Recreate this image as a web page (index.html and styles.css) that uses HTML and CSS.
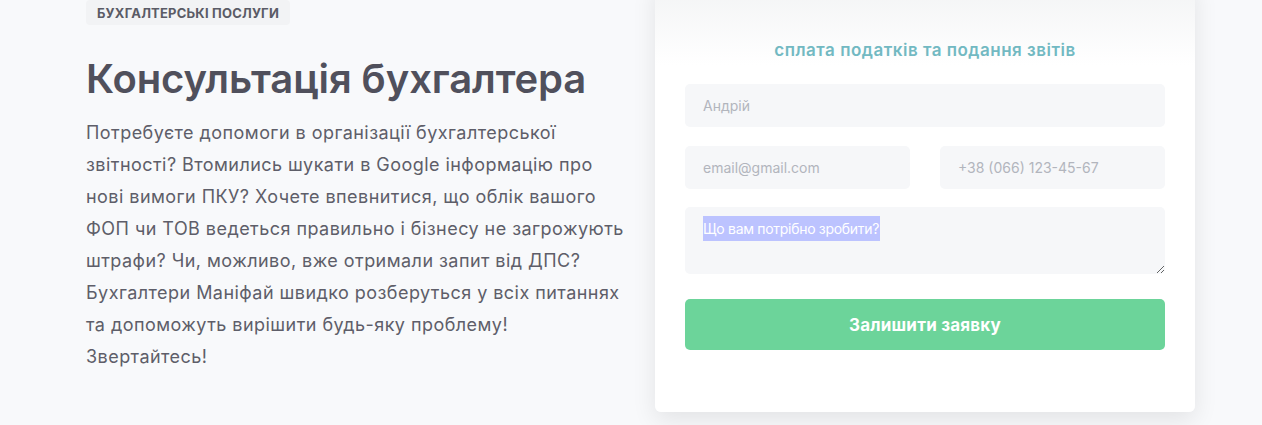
FILE: index.html
```html
<!DOCTYPE html>
<html lang="uk">
<head>
<meta charset="utf-8">
<link rel="stylesheet" href="styles.css">
</head>
<body>
<section class="hero">
  <div class="info">
    <span class="badge">Бухгалтерські послуги</span>
    <h1 class="title">Консультація бухгалтера</h1>
    <p class="text">Потребуєте допомоги в організації бухгалтерської звітності? Втомились шукати в Google інформацію про нові вимоги ПКУ? Хочете впевнитися, що облік вашого ФОП чи ТОВ ведеться правильно і бізнесу не загрожують штрафи? Чи, можливо, вже отримали запит від ДПС? Бухгалтери Маніфай швидко розберуться у всіх питаннях та допоможуть вирішити будь-яку проблему! Звертайтесь!</p>
  </div>
  <form class="card">
    <h2 class="card-title">сплата податків та подання звітів</h2>
    <input class="field" type="text" placeholder="Андрій">
    <div class="row">
      <input class="field" type="email" placeholder="email@gmail.com">
      <input class="field" type="tel" placeholder="+38 (066) 123-45-67">
    </div>
    <textarea class="field area" placeholder="Що вам потрібно зробити?"></textarea>
    <button class="submit" type="button">Залишити заявку</button>
  </form>
</section>
</body>
</html>
```
FILE: styles.css
```css
* { box-sizing: border-box; }
html, body { margin: 0; padding: 0; }
body {
  background: #f8f9fb;
  font-family: Inter, "Noto Sans", sans-serif;
  height: 425px;
  overflow: hidden;
}
.hero {
  display: flex;
  gap: 30px;
  padding-left: 86px;
  margin-top: -20px;
}
.info {
  width: 539px;
  flex: none;
  padding-top: 20px;
}
.badge {
  display: inline-block;
  background: #f2f3f5;
  color: #5a5b66;
  font-size: 13px;
  font-weight: 700;
  text-transform: uppercase;
  padding: 6px 11px 5px;
  line-height: 14px;
  border-radius: 4px;
  letter-spacing: 0.2px;
}
.title {
  margin: 30px 0 14px;
  font-size: 40px;
  line-height: 48px;
  font-weight: 600;
  color: #50505c;
  letter-spacing: -0.1px;
}
.text {
  margin: 0;
  font-size: 18px;
  line-height: 32px;
  color: #5e5e69;
  letter-spacing: 0.45px;
}
.card {
  width: 540px;
  flex: none;
  height: 432px;
  background: linear-gradient(#f2f3f4 0, #ffffff 85px);
  border-radius: 6px;
  box-shadow: 0 8px 24px rgba(0, 0, 0, 0.09);
  padding: 56px 30px 30px;
  display: flex;
  flex-direction: column;
}
.card-title {
  margin: 0 0 20px;
  text-align: center;
  font-size: 17px;
  line-height: 28px;
  font-weight: 600;
  color: #72b9c2;
  letter-spacing: 0.5px;
}
.field {
  display: block;
  width: 100%;
  height: 43px;
  border: none;
  background: #f6f7f9;
  border-radius: 5px;
  padding: 0 18px;
  font-family: inherit;
  font-size: 14px;
  color: #50505c;
  outline: none;
}
.field::placeholder { color: #b2b5bd; }
.row {
  display: flex;
  gap: 30px;
  margin: 19px 0 18px;
}
.area {
  height: 67px;
  padding: 9px 18px;
  line-height: 25px;
  resize: vertical;
}
.area::placeholder {
  color: #ffffff;
  letter-spacing: -0.3px;
  background: linear-gradient(#bcc3ff, #bcc3ff) no-repeat 0 0 / 177px 25px;
}
.submit {
  margin-top: 25px;
  height: 51px;
  border: none;
  border-radius: 5px;
  background: #6cd49a;
  color: #ffffff;
  font-family: inherit;
  font-size: 17px;
  font-weight: 700;
  letter-spacing: 0.2px;
}
```
